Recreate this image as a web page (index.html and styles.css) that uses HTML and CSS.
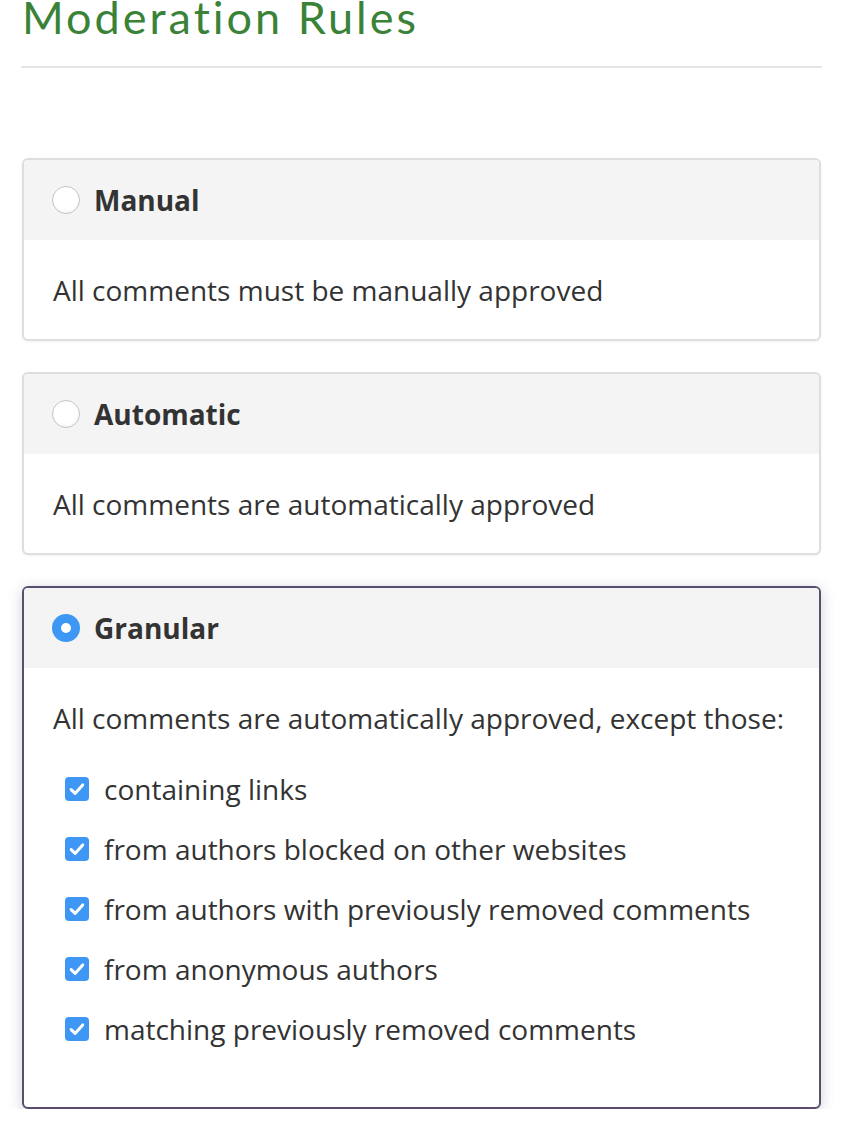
FILE: index.html
```html
<!DOCTYPE html>
<html>
<head>
<meta charset="utf-8">
<link rel="stylesheet" href="styles.css">
</head>
<body>
<h1 class="title">Moderation Rules</h1>
<hr class="divider">
<div class="cards">
  <div class="card">
    <div class="card-head"><span class="radio"></span><span class="label">Manual</span></div>
    <div class="card-body"><p class="desc">All comments must be manually approved</p></div>
  </div>
  <div class="card">
    <div class="card-head"><span class="radio"></span><span class="label">Automatic</span></div>
    <div class="card-body"><p class="desc">All comments are automatically approved</p></div>
  </div>
  <div class="card card-active">
    <div class="card-head"><span class="radio radio-on"></span><span class="label">Granular</span></div>
    <div class="card-body card-body-list">
      <p class="desc">All comments are automatically approved, except those:</p>
      <ul class="checks">
        <li class="check-row"><span class="checkbox"><svg viewBox="0 0 24 24" width="24" height="24"><path d="M6.2 12.6l3.9 3.9 7.6-8.6" fill="none" stroke="#fff" stroke-width="3" stroke-linecap="round" stroke-linejoin="round"/></svg></span>containing links</li>
        <li class="check-row"><span class="checkbox"><svg viewBox="0 0 24 24" width="24" height="24"><path d="M6.2 12.6l3.9 3.9 7.6-8.6" fill="none" stroke="#fff" stroke-width="3" stroke-linecap="round" stroke-linejoin="round"/></svg></span>from authors blocked on other websites</li>
        <li class="check-row"><span class="checkbox"><svg viewBox="0 0 24 24" width="24" height="24"><path d="M6.2 12.6l3.9 3.9 7.6-8.6" fill="none" stroke="#fff" stroke-width="3" stroke-linecap="round" stroke-linejoin="round"/></svg></span>from authors with previously removed comments</li>
        <li class="check-row"><span class="checkbox"><svg viewBox="0 0 24 24" width="24" height="24"><path d="M6.2 12.6l3.9 3.9 7.6-8.6" fill="none" stroke="#fff" stroke-width="3" stroke-linecap="round" stroke-linejoin="round"/></svg></span>from anonymous authors</li>
        <li class="check-row"><span class="checkbox"><svg viewBox="0 0 24 24" width="24" height="24"><path d="M6.2 12.6l3.9 3.9 7.6-8.6" fill="none" stroke="#fff" stroke-width="3" stroke-linecap="round" stroke-linejoin="round"/></svg></span>matching previously removed comments</li>
      </ul>
    </div>
  </div>
</div>
</body>
</html>
```

FILE: styles.css
```css
html, body {
  margin: 0;
  padding: 0;
  background: #fff;
}
body {
  padding: 0 21px;
  font-family: "Open Sans", "Liberation Sans", sans-serif;
  color: #333;
}
.title {
  margin: -3px 0 0 0;
  padding-left: 1px;
  font-family: "Lato", "DejaVu Sans", sans-serif;
  font-weight: 400;
  font-size: 45px;
  line-height: 40px;
  letter-spacing: 3px;
  color: #3b8239;
  height: 40px;
}
.divider {
  margin: 29px 0 0 0;
  border: 0;
  height: 2px;
  background: #e5e5e5;
}
.cards {
  margin-top: 90px;
  padding: 0 1px;
  display: flex;
  flex-direction: column;
  gap: 31px;
}
.card {
  border: 2px solid #dedede;
  border-radius: 6px;
  background: #fff;
  overflow: hidden;
  box-shadow: 0 1px 3px rgba(0,0,0,0.06);
}
.card-active {
  border-color: #5a4e6e;
  box-shadow: 0 3px 14px rgba(90, 78, 110, 0.28);
}
.card-head {
  background: #f4f4f4;
  height: 80px;
  display: flex;
  align-items: center;
  padding-left: 28px;
  gap: 14px;
}
.radio {
  width: 28px;
  height: 28px;
  box-sizing: border-box;
  border-radius: 50%;
  border: 1.5px solid #c4c4c4;
  background: radial-gradient(circle at 50% 40%, #fff 55%, #f0f0f0 100%);
  flex: none;
}
.radio-on {
  border: 9px solid #3e96f5;
  background: #fff;
}
.label {
  font-weight: 700;
  font-size: 28px;
  line-height: 38px;
  color: #333;
}
.card-body {
  padding: 30px 28px 29px 29px;
}
.card-body-list {
  padding-bottom: 58px;
}
.desc {
  margin: 0;
  font-size: 28px;
  line-height: 40px;
  color: #333;
}
.checks {
  list-style: none;
  margin: 0;
  padding: 31px 0 0 12px;
  display: flex;
  flex-direction: column;
  gap: 20px;
}
.check-row {
  display: flex;
  align-items: center;
  gap: 15px;
  font-size: 28px;
  line-height: 40px;
}
.checkbox {
  width: 24px;
  height: 24px;
  border-radius: 4px;
  background: #3e96f5;
  display: flex;
  flex: none;
}
.checkbox svg {
  display: block;
}
```
